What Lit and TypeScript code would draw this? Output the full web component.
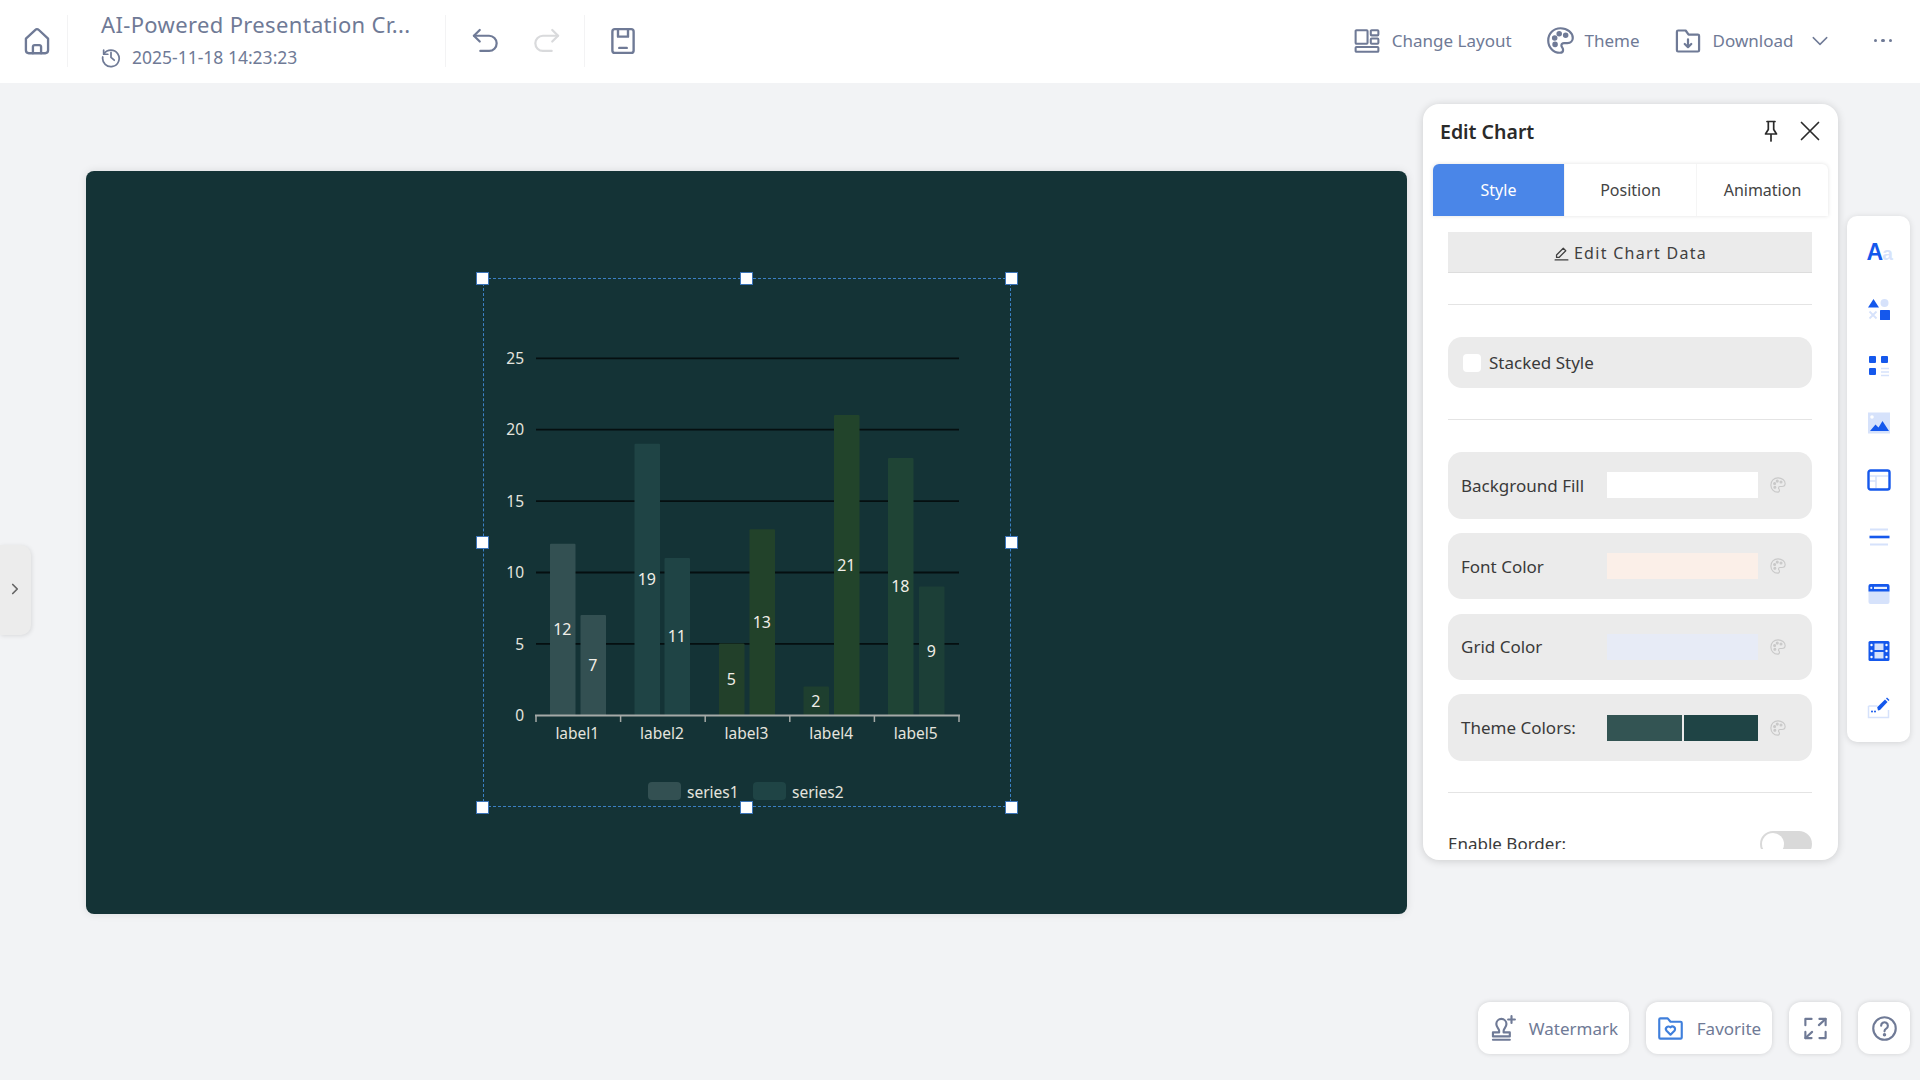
import { LitElement, html, css, svg } from "lit";
import { customElement } from "lit/decorators.js";

const ico = (body: unknown, cls = "ic") => html`<svg class=${cls} viewBox="0 0 24 24" fill="none" stroke="currentColor" stroke-width="1.9" stroke-linecap="round" stroke-linejoin="round">${body}</svg>`;

const I = {
  home: svg`<path d="M2.500 10 10.400 2.600a2.300 2.300 0 0 1 3.200 0L21.500 10v10a2.500 2.500 0 0 1-2.500 2.500H5A2.500 2.500 0 0 1 2.500 20z"/><path d="M8.500 22.500V17a1.500 1.500 0 0 1 1.500-1.500h4a1.500 1.500 0 0 1 1.500 1.500v5.500"/>`,
  clock: svg`<path d="M4 4.500v4.500h4.500"/><path d="M4.400 8.500A9 9 0 1 1 3 12"/><path d="M12 7v5.500l3.500 3"/>`,
  undo: svg`<path d="M7.500 2.500 2.500 7.500 7.500 12.500"/><path d="M2.500 7.500H15.500a6.500 6.500 0 0 1 0 13H8"/>`,
  redo: svg`<path d="M16.500 2.500 21.500 7.500 16.500 12.500"/><path d="M21.500 7.500H8.500a6.500 6.500 0 0 0 0 13H16"/>`,
  save: svg`<rect x="3.500" y="2.500" width="17" height="19" rx="2"/><path d="M8 2.500V8.500h8V2.500"/><path d="M9 17.500h6"/>`,
  layout: svg`<rect x="1.500" y="2" width="11" height="12.500" rx=".8"/><rect x="15.500" y="2" width="7" height="4.800" rx=".8"/><rect x="15.500" y="9.700" width="7" height="4.800" rx=".8"/><rect x="1.500" y="17.500" width="21" height="4.500" rx=".8"/>`,
  palette: svg`<path d="M12 2.500C6.500 2.500 2.500 6.800 2.500 12s4 9.500 9 9.500c1.700 0 2.500-1 2.500-2.200 0-1.800-1.300-2.100-1.300-3.400 0-1.100.9-1.900 2.100-1.900h2.500c2.700 0 4.200-1.800 4.200-4C21.500 5.800 17.300 2.500 12 2.500z"/><circle cx="7.500" cy="10" r="1.300" fill="currentColor"/><circle cx="11" cy="6.800" r="1.300" fill="currentColor"/><circle cx="16" cy="8" r="1.300" fill="currentColor"/><circle cx="7.800" cy="15" r="1.300" fill="currentColor"/>`,
  download: svg`<path d="M2.500 4a1 1 0 0 1 1-1h6.500l2.500 3.500h8a1 1 0 0 1 1 1V20a1 1 0 0 1-1 1h-17a1 1 0 0 1-1-1z"/><path d="M12 10.500v6.500M9.200 14.500 12 17.300l2.800-2.800"/>`,
  chevron: svg`<path d="M3 7.500 12 16.500 21 7.500"/>`,
  pin: svg`<path d="M8 2.500h8M9.300 2.500v8L6.500 15h11l-2.800-4.500v-8M12 15v7"/>`,
  close: svg`<path d="M3.500 3.500 20.500 20.500M20.500 3.500 3.500 20.500"/>`,
  pen: svg`<path d="M5 15.500 14.500 6l3.500 3.500L8.500 19H5z"/><path d="M3 22.500h18"/>`,
  stamp: svg`<path d="M9 14c0-2-2.500-3-2.500-6a4.500 4.500 0 0 1 9 0c0 3-2.500 4-2.500 6v1.500h5.500V19H3.500v-3.500H9z"/><path d="M3.500 22h15"/><path d="M20 1v6M17 4h6"/>`,
  heartFolder: svg`<path d="M2 4a1 1 0 0 1 1-1h6.500L12 6h9a1 1 0 0 1 1 1v13a1 1 0 0 1-1 1H3a1 1 0 0 1-1-1z"/><path d="M12 17.500 8.500 14a2.300 2.300 0 0 1 3.500-3 2.300 2.300 0 0 1 3.500 3z"/>`,
  expand: svg`<path d="M3 9V3.500h5.500M21 9V3.500h-5.500" /><path d="M15 9l6-5.500"/><path d="M3 15v5.500h5.500M21 15v5.500h-5.500"/><path d="M9 15l-6 5.500"/>`,
  help: svg`<circle cx="12" cy="12" r="10"/><path d="M9 9.500a3 3 0 1 1 4.500 2.600c-1 .6-1.500 1.200-1.500 2.400"/><circle cx="12" cy="17.500" r=".6" fill="currentColor"/>`,
};

const B = "#1558ec";
const L = "#d6e2fb";
const tools = [
  html`<span class="aa"><b>A</b><i>a</i></span>`,
  svg`<path d="M6.500 2 12 10.500H1z" fill="${B}"/><circle cx="17.500" cy="6" r="4" fill="${L}"/><path d="M2.500 14.500l7 7M9.500 14.500l-7 7" stroke="${L}" stroke-width="1.800"/><rect x="13" y="13" width="10" height="10" fill="${B}" rx=".6"/>`,
  svg`<rect x="2" y="2" width="7" height="7" rx="1" fill="${B}"/><rect x="14" y="2" width="7" height="7" rx="1" fill="${B}"/><rect x="2" y="14" width="7" height="7" rx="1" fill="${B}"/><path d="M14 14.500h8M14 18h8M14 21.500h8" stroke="${L}" stroke-width="1.500"/>`,
  svg`<rect x="1" y="1.500" width="22" height="21" fill="${L}"/><circle cx="5" cy="6" r="1.800" fill="#fff"/><path d="M3 20l5.500-6.500 3 3 4-6.500L22 20z" fill="${B}"/>`,
  svg`<path d="M3 8h18M9 8v12M3 13h6" stroke="${L}" stroke-width="1.600" fill="none"/><rect x="1.500" y="2.500" width="21" height="19" rx="2" stroke="${B}" stroke-width="2.400" fill="none"/>`,
  svg`<path d="M3 4.500h18M3 19.500h18" stroke="${L}" stroke-width="2"/><path d="M2.500 12h20" stroke="${B}" stroke-width="2.600"/>`,
  svg`<rect x="1.500" y="2" width="21" height="20" rx="2" fill="${L}"/><path d="M3.500 2h17a2 2 0 0 1 2 2v5.500h-21V4a2 2 0 0 1 2-2z" fill="${B}"/><rect x="7" y="4.800" width="13" height="2.200" fill="#e8effd"/><circle cx="4.300" cy="5.900" r="1.100" fill="#e8effd"/>`,
  svg`<rect x="1.500" y="2" width="21" height="20" rx="1.500" fill="${B}"/><rect x="7.500" y="4.500" width="9" height="6.500" fill="${L}"/><rect x="7.500" y="13" width="9" height="6.500" fill="${L}"/><g fill="#fff"><circle cx="4.500" cy="6" r="1.200"/><circle cx="4.500" cy="12" r="1.200"/><circle cx="4.500" cy="18" r="1.200"/><circle cx="19.500" cy="6" r="1.200"/><circle cx="19.500" cy="12" r="1.200"/><circle cx="19.500" cy="18" r="1.200"/></g>`,
  svg`<path d="M1.500 10h9M21.500 14v7.500h-20V10" fill="none" stroke="${L}" stroke-width="1.500"/><path d="M11 14.500l-.8-3.300L18 3.500l2.500 2.500-7.500 8z" fill="${B}"/><path d="M19 2.500l1-1 2.500 2.500-1 1z" fill="${B}"/><circle cx="5" cy="15.500" r="1" fill="${B}"/><circle cx="8" cy="15.500" r="1" fill="${B}"/>`,
];

type Bar = { v: number; x: number; c: string };
const bars: Bar[] = [
  { v: 12, x: 550, c: "#335052" }, { v: 7, x: 580.500, c: "#335052" },
  { v: 19, x: 634.500, c: "#1f4445" }, { v: 11, x: 664.500, c: "#1f4445" },
  { v: 5, x: 719, c: "#22402a" }, { v: 13, x: 749.500, c: "#22422a" },
  { v: 2, x: 803.500, c: "#1e3f2f" }, { v: 21, x: 834, c: "#22442b" },
  { v: 18, x: 888, c: "#1f4435" }, { v: 9, x: 919, c: "#1c3f37" },
];
const y0 = 715;
const unit = 14.28;
const names = ["label1", "label2", "label3", "label4", "label5"];

const chart = svg`
  ${[5, 10, 15, 20, 25].map((v) => svg`<line x1="536" x2="959" y1=${y0 - v * unit + 0.3} y2=${y0 - v * unit + 0.3} stroke="#050f10" stroke-width="1.800"/>`)}
  ${[0, 5, 10, 15, 20, 25].map((v) => svg`<text class="t" x="524" y=${y0 - v * unit + 6} text-anchor="end">${v}</text>`)}
  ${bars.map((b) => svg`<path d="M${b.x} ${y0}V${y0 - b.v * unit + 1}q0-1 1-1h23.500q1 0 1 1V${y0}z" fill=${b.c}/>`)}
  ${bars.map((b) => svg`<text class="t lab" x=${b.x + 12.300} y=${y0 - (b.v * unit) / 2 + 6} text-anchor="middle">${b.v}</text>`)}
  <line x1="535" x2="960" y1="715.500" y2="715.500" stroke="#a5aaa7" stroke-width="2"/>
  ${[0, 1, 2, 3, 4, 5].map((i) => svg`<line x1=${536 + i * 84.6} x2=${536 + i * 84.6} y1="715" y2="722" stroke="#a5aaa7" stroke-width="1.500"/>`)}
  ${names.map((n, i) => svg`<text class="t" x=${577.300 + i * 84.6} y="739" text-anchor="middle">${n}</text>`)}
  <rect x="648" y="782" width="33" height="18" rx="4" fill="#335052"/>
  <text class="t" x="687" y="798">series1</text>
  <rect x="753" y="782" width="33" height="18" rx="4" fill="#1f4445"/>
  <text class="t" x="792" y="798">series2</text>
`;

const handles = [[0, 0], [50, 0], [100, 0], [0, 50], [100, 50], [0, 100], [50, 100], [100, 100]];
const fills = [
  { label: "Background Fill", colors: ["#ffffff"] },
  { label: "Font Color", colors: ["#fbefe8"] },
  { label: "Grid Color", colors: ["#e7ebf6"] },
  { label: "Theme Colors:", colors: ["#335453", "#1f4445"] },
];

@customElement("app-root")
export class AppRoot extends LitElement {
  static styles = css`
    :host { display: block; position: relative; width: 1920px; height: 1080px; overflow: hidden; background: #f2f3f5; font-family: "Noto Sans", "Open Sans", sans-serif; color: #6f7a96; }
    * { box-sizing: border-box; }
    .ic { display: block; width: 26px; height: 26px; flex: none; }
    header { height: 83px; background: #fff; display: flex; align-items: center; padding-bottom: 2px; }
    .home { width: 68px; height: 52px; display: flex; align-items: center; justify-content: center; padding-left: 7px; border-right: 1px solid #f3f3f4; }
    .home .ic { width: 28px; height: 28px; stroke-width: 2; }
    .doc { width: 378px; height: 52px; padding: 0 0 2.500px 33px; border-right: 1px solid #f3f3f4; display: flex; flex-direction: column; justify-content: center; gap: 9.500px; }
    .title { font-size: 22px; line-height: 26px; letter-spacing: .35px; white-space: nowrap; }
    .time { display: flex; align-items: center; gap: 10px; font-size: 17.500px; line-height: 22px; margin-left: -1px; }
    .time .ic { width: 22px; height: 22px; }
    .hist { width: 139px; height: 52px; border-right: 1px solid #f3f3f4; display: flex; align-items: center; gap: 34px; padding-left: 25px; }
    .hist .ic { width: 28px; height: 28px; }
    .redo { color: #d9dadc; }
    .save { margin-left: 25px; width: 26px; }
    .save .ic { width: 30px; height: 30px; margin: 0 -2px; }
    .spacer { flex: 1; }
    .act { display: flex; align-items: center; font-size: 17px; white-space: nowrap; }
    .act .ic { margin-right: 12px; }
    .act .big { width: 31px; height: 31px; margin: -3px 9px -3px -3px; stroke-width: 1.700; }
    .act .dl { width: 28px; height: 28px; margin: -1px 11px -1px -1px; }
    .a1 { margin-right: 36px; }
    .a2 { margin-right: 35px; }
    .act .chev { width: 18px; height: 18px; margin: 0 0 0 17px; }
    .dots { margin: 0 28px 0 45px; display: flex; gap: 4px; }
    .dots span { width: 3.500px; height: 3.500px; border-radius: 50%; background: #6f7a96; }
    main { padding: 88px 0 0 86px; }
    .slide { position: relative; width: 1321px; height: 743px; background: #143336; border-radius: 8px; box-shadow: 0 0 8px rgba(0,0,0,.1); }
    .chart { position: absolute; left: 396.500px; top: 107px; width: 528.500px; height: 529px; }
    .chart svg { display: block; width: 528px; height: 529px; overflow: visible; }
    .t { font-family: "Noto Sans", sans-serif; font-size: 15.500px; fill: #e4e4de; }
    .lab { fill: #f1eee8; font-size: 16px; }
    .frame { position: absolute; inset: 0; border: 1px dashed #3b80c4; }
    .hd { position: absolute; width: 13px; height: 13px; margin: -6.500px 0 0 -6.500px; background: #fff; border: 1px solid #3b74b8; }
    .panel { position: absolute; left: 1423px; top: 104px; width: 415px; height: 756px; background: #fff; border-radius: 16px; box-shadow: 0 1px 8px rgba(0,0,0,.16); display: flex; flex-direction: column; color: #3a3a3a; }
    .phead { height: 60px; flex: none; display: flex; align-items: center; padding: 0 16px 6px 17px; color: #2a2a2a; }
    .phead h2 { margin: 0; font-size: 19.500px; font-weight: 600; flex: 1; }
    .phead .ic { width: 24px; height: 24px; stroke-width: 1.700; }
    .phead .pin { margin-right: 15px; }
    .tabs { flex: none; margin: 0 10px; height: 52px; display: flex; box-shadow: 0 0 4px rgba(0,0,0,.12); border-radius: 6px 6px 0 0; }
    .tab { flex: 1; display: flex; align-items: center; justify-content: center; font-size: 16px; color: #444; border-right: 1px solid #f5f5f5; }
    .tab.on { background: #4a86e8; color: #fff; border-radius: 6px 0 0 0; }
    .tab:last-child { border-right: 0; }
    .body { flex: none; height: 633px; overflow: hidden; padding: 16px 26px 0 25px; }
    .btn { height: 41px; background: #ebebeb; border-bottom: 1px solid #ddd; display: flex; align-items: center; justify-content: center; gap: 4px; padding-top: 1px; font-size: 16px; letter-spacing: 1.300px; color: #3f3f3f; }
    .btn .ic { width: 17px; height: 17px; stroke-width: 1.800; }
    hr { border: 0; border-top: 1px solid #e4e4e4; margin: 31px 0 32px; }
    .check { height: 51px; background: #ebebeb; border-radius: 14px; display: flex; align-items: center; padding-left: 15px; gap: 8px; font-size: 17px; }
    .box { width: 18px; height: 18px; background: #fff; border-radius: 4px; }
    .rows { display: flex; flex-direction: column; gap: 14.300px; }
    .row { height: 66.500px; background: #ebebeb; border-radius: 14px; display: flex; align-items: center; padding-left: 13px; font-size: 17px; }
    .row label { width: 146px; white-space: nowrap; }
    .sw { width: 151px; height: 26px; display: flex; gap: 2px; }
    .sw span { flex: 1; }
    .row .ic { width: 18px; height: 18px; margin-left: 11px; color: #c9c9c9; stroke-width: 1.500; }
    .enable { display: flex; justify-content: space-between; align-items: flex-start; height: 26px; margin-top: 38px; font-size: 17px; line-height: 26px; }
    .switch { width: 52px; height: 26px; border-radius: 13px; background: #d9d9d9; padding: 2px; }
    .switch span { display: block; width: 22px; height: 22px; border-radius: 50%; background: #fff; }
    .toolbar { position: absolute; left: 1847px; top: 216px; width: 63px; height: 526px; background: #fff; border-radius: 10px; box-shadow: 0 1px 6px rgba(0,0,0,.13); display: flex; flex-direction: column; align-items: center; padding-top: 24px; gap: 33px; }
    .tool { width: 24px; height: 24px; display: block; flex: none; }
    .aa { width: 24px; height: 24px; flex: none; display: flex; align-items: baseline; font-family: "Liberation Sans", sans-serif; line-height: 24px; }
    .aa b { font-size: 23px; color: #1558ec; }
    .aa i { font-style: normal; font-size: 19px; color: #d6e2fb; font-weight: 700; margin-left: -1px; }
    .foot { position: absolute; right: 10px; top: 1002px; display: flex; gap: 17px; }
    .fb { height: 52px; background: #fff; border-radius: 12px; box-shadow: 0 0 5px rgba(0,0,0,.14); display: flex; align-items: center; justify-content: center; font-size: 17px; padding: 0 10px; gap: 13px; }
    .fb .ic { width: 27px; height: 27px; }
    .fb.sq { width: 52px; padding: 0; }
    .fb.wm { width: 151px; }
    .fb.fv { width: 126px; }
    .fb.fv .ic { color: #3f7fdc; }
    .side { position: absolute; left: 0; top: 545px; width: 31px; height: 90px; background: #ececec; border-radius: 0 10px 10px 0; box-shadow: 1px 1px 4px rgba(0,0,0,.1); display: flex; align-items: center; justify-content: center; color: #666; padding: 0 2px 3px 0; }
    .side svg { width: 12px; height: 12px; transform: rotate(-90deg); stroke-width: 3.500; }
  `;

  render() {
    return html`
      <header>
        <div class="home">${ico(I.home)}</div>
        <div class="doc">
          <div class="title">AI-Powered Presentation Cr...</div>
          <div class="time">${ico(I.clock)}<span>2025-11-18 14:23:23</span></div>
        </div>
        <div class="hist">${ico(I.undo)}<span class="redo">${ico(I.redo)}</span></div>
        <div class="save">${ico(I.save)}</div>
        <div class="spacer"></div>
        <div class="act a1">${ico(I.layout)}<span>Change Layout</span></div>
        <div class="act a2">${ico(I.palette, "ic big")}<span>Theme</span></div>
        <div class="act">${ico(I.download, "ic dl")}<span>Download</span>${ico(I.chevron, "ic chev")}</div>
        <div class="dots"><span></span><span></span><span></span></div>
      </header>
      <main>
        <div class="slide">
          <div class="chart">
            <svg viewBox="483 278 528 529">${chart}</svg>
            <div class="frame"></div>
            ${handles.map(([x, y]) => html`<div class="hd" style="left:${x}%;top:${y}%"></div>`)}
          </div>
        </div>
      </main>
      <div class="side">${ico(I.chevron)}</div>
      <section class="panel">
        <div class="phead">
          <h2>Edit Chart</h2>
          ${ico(I.pin, "ic pin")}${ico(I.close)}
        </div>
        <div class="tabs">
          <div class="tab on">Style</div><div class="tab">Position</div><div class="tab">Animation</div>
        </div>
        <div class="body">
          <div class="btn">${ico(I.pen)}<span>Edit Chart Data</span></div>
          <hr />
          <div class="check"><span class="box"></span><span>Stacked Style</span></div>
          <hr />
          <div class="rows">
            ${fills.map((f) => html`<div class="row"><label>${f.label}</label><div class="sw">${f.colors.map((c) => html`<span style="background:${c}"></span>`)}</div>${ico(I.palette)}</div>`)}
          </div>
          <hr />
          <div class="enable"><span>Enable Border:</span><div class="switch"><span></span></div></div>
        </div>
      </section>
      <nav class="toolbar">
        ${tools.map((t, i) => i === 0 ? t : html`<svg class="tool" viewBox="0 0 24 24">${t}</svg>`)}
      </nav>
      <div class="foot">
        <div class="fb wm">${ico(I.stamp)}<span>Watermark</span></div>
        <div class="fb fv">${ico(I.heartFolder)}<span>Favorite</span></div>
        <div class="fb sq">${ico(I.expand)}</div>
        <div class="fb sq">${ico(I.help)}</div>
      </div>
    `;
  }
}
